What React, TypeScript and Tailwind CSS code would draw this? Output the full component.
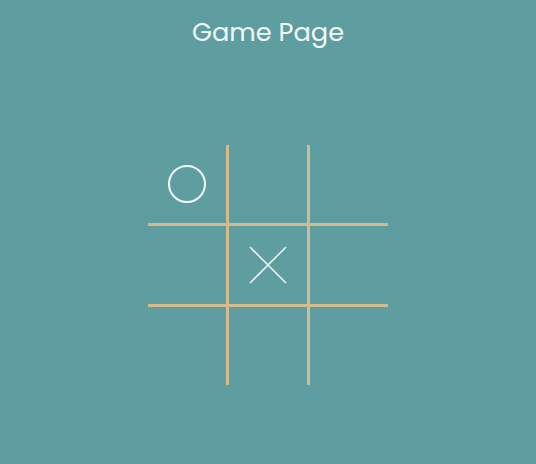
const board = ["O", "", "", "", "X", "", "", "", ""];

function Cell({ value }: { value: string }) {
  return (
    <div className="w-[78px] h-[78px] bg-[#5f9ea0] flex items-center justify-center">
      {value === "O" && (
        <div className="w-[38px] h-[38px] rounded-full border-2 border-[#f4fbfb]" />
      )}
      {value === "X" && (
        <svg width="38" height="38" viewBox="0 0 38 38">
          <path d="M1 1L37 37M37 1L1 37" stroke="#e6f2f2" strokeWidth="1.6" />
        </svg>
      )}
    </div>
  );
}

export default function App() {
  return (
    <div className="min-h-screen bg-[#5f9ea0] flex flex-col items-center font-['Poppins','Inter',sans-serif]">
      <h1 className="mt-[16px] text-[25.7px] leading-[32px] text-[#f2f8f8]">Game Page</h1>
      <div className="mt-[97px] grid grid-cols-3 gap-[3px] bg-[#d4bb8e]">
        {board.map((v, i) => (
          <Cell key={i} value={v} />
        ))}
      </div>
    </div>
  );
}
